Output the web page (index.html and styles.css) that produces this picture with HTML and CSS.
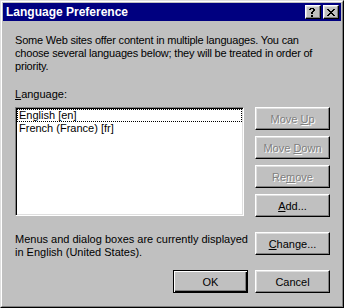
FILE: index.html
```html
<!DOCTYPE html>
<html>
<head>
<meta charset="utf-8">
<title>Language Preference</title>
<link rel="stylesheet" href="styles.css">
</head>
<body>
<div class="window">
  <div class="frame">
    <div class="titlebar">
      <span class="title">Language Preference</span>
      <div class="caption-buttons">
        <button class="cap-btn" aria-label="Help">
          <svg width="8" height="9" viewBox="0 0 8 9" shape-rendering="crispEdges">
            <path d="M1 0h4v1H1z M0 1h2v1H0z M4 1h2v1H4z M4 2h2v1H4z M3 3h2v1H3z M2 4h2v1H2z M2 5h2v1H2z M2 7h2v2H2z" fill="#000"/>
          </svg>
        </button>
        <button class="cap-btn" aria-label="Close">
          <svg width="8" height="7" viewBox="0 0 8 7" shape-rendering="crispEdges">
            <path d="M0 0h2v1H0z M6 0h2v1H6z M1 1h2v1H1z M5 1h2v1H5z M2 2h4v1H2z M3 3h2v1H3z M2 4h4v1H2z M1 5h2v1H1z M5 5h2v1H5z M0 6h2v1H0z M6 6h2v1H6z" fill="#000"/>
          </svg>
        </button>
      </div>
    </div>
    <div class="content">
      <p class="intro">Some Web sites offer content in multiple languages. You can<br>choose several languages below; they will be treated in order of<br>priority.</p>
      <div class="label"><u>L</u>anguage:</div>
      <div class="list-row">
        <div class="listbox">
          <div class="item focused">English [en]</div>
          <div class="item">French (France) [fr]</div>
        </div>
        <div class="side-buttons">
          <button class="btn disabled">Move <u>U</u>p</button>
          <button class="btn disabled">Move <u>D</u>own</button>
          <button class="btn disabled">Re<u>m</u>ove</button>
          <button class="btn"><u>A</u>dd...</button>
        </div>
      </div>
      <div class="ui-row">
        <p class="ui-text">Menus and dialog boxes are currently displayed<br>in English (United States).</p>
        <button class="btn"><u>C</u>hange...</button>
      </div>
      <div class="footer">
        <button class="btn default">OK</button>
        <button class="btn">Cancel</button>
      </div>
    </div>
  </div>
</div>
</body>
</html>
```

FILE: styles.css
```css
html, body {
  margin: 0;
  padding: 0;
  background: #c0c0c0;
}

body {
  font-family: "Liberation Sans", Arial, sans-serif;
  font-size: 11px;
  color: #000;
}

.window {
  width: 344px;
  height: 308px;
  box-sizing: border-box;
  border: 1px solid;
  border-color: #dfdfdf #000 #000 #dfdfdf;
  background: #c0c0c0;
}

.frame {
  height: 100%;
  box-sizing: border-box;
  border: 1px solid;
  border-color: #fff #808080 #808080 #fff;
  padding: 1px;
  display: flex;
  flex-direction: column;
}

.titlebar {
  height: 18px;
  flex: none;
  background: #000080;
  display: flex;
  align-items: center;
  justify-content: space-between;
  padding: 0 2px 0 3px;
}

.title {
  color: #fff;
  font-weight: bold;
  font-size: 12px;
  line-height: 18px;
}

.caption-buttons {
  display: flex;
  gap: 2px;
}

.cap-btn {
  width: 16px;
  height: 14px;
  box-sizing: border-box;
  padding: 0;
  margin: 0;
  background: #c0c0c0;
  border: 1px solid;
  border-color: #fff #000 #000 #fff;
  box-shadow: inset -1px -1px #808080, inset 1px 1px #dfdfdf;
  display: flex;
  align-items: center;
  justify-content: center;
}

.cap-btn svg {
  display: block;
}

.content {
  flex: 1;
  display: flex;
  flex-direction: column;
  padding: 0 11px 0 12px;
  line-height: 13px;
}

.intro {
  margin: 13px 0 0;
  letter-spacing: -0.2px;
}

.label {
  margin-top: 15px;
}

u {
  text-underline-offset: 1px;
}

.list-row {
  margin-top: 6px;
  display: flex;
  justify-content: space-between;
  align-items: flex-start;
}

.listbox {
  width: 229px;
  height: 109px;
  box-sizing: border-box;
  background: #fff;
  border: 1px solid;
  border-color: #808080 #fff #fff #808080;
  box-shadow: inset 1px 1px #000, inset -1px -1px #dfdfdf;
  padding: 1px;
}

.item {
  height: 13px;
  box-sizing: border-box;
  line-height: 11px;
  padding-left: 1px;
  border: 1px dotted transparent;
  white-space: nowrap;
}

.item.focused {
  border-color: #000;
}

.side-buttons {
  display: flex;
  flex-direction: column;
  gap: 6px;
}

.btn {
  width: 75px;
  height: 23px;
  box-sizing: border-box;
  margin: 0;
  padding: 0;
  font-family: inherit;
  font-size: 11px;
  color: #000;
  background: #c0c0c0;
  border: 1px solid;
  border-color: #fff #000 #000 #fff;
  box-shadow: inset -1px -1px #808080, inset 1px 1px #dfdfdf;
  text-align: center;
}

.btn.disabled {
  color: #808080;
  text-shadow: 1px 1px 0 #fff;
}

.btn.default {
  border: 1px solid #000;
  box-shadow: inset 1px 1px #fff, inset -1px -1px #000, inset -2px -2px #808080;
}

.ui-row {
  margin-top: 15px;
  display: flex;
  justify-content: space-between;
  align-items: flex-start;
}

.ui-text {
  margin: 1px 0 0;
}

.footer {
  margin-top: 11px;
  display: flex;
  justify-content: flex-end;
  gap: 7px;
}
```
